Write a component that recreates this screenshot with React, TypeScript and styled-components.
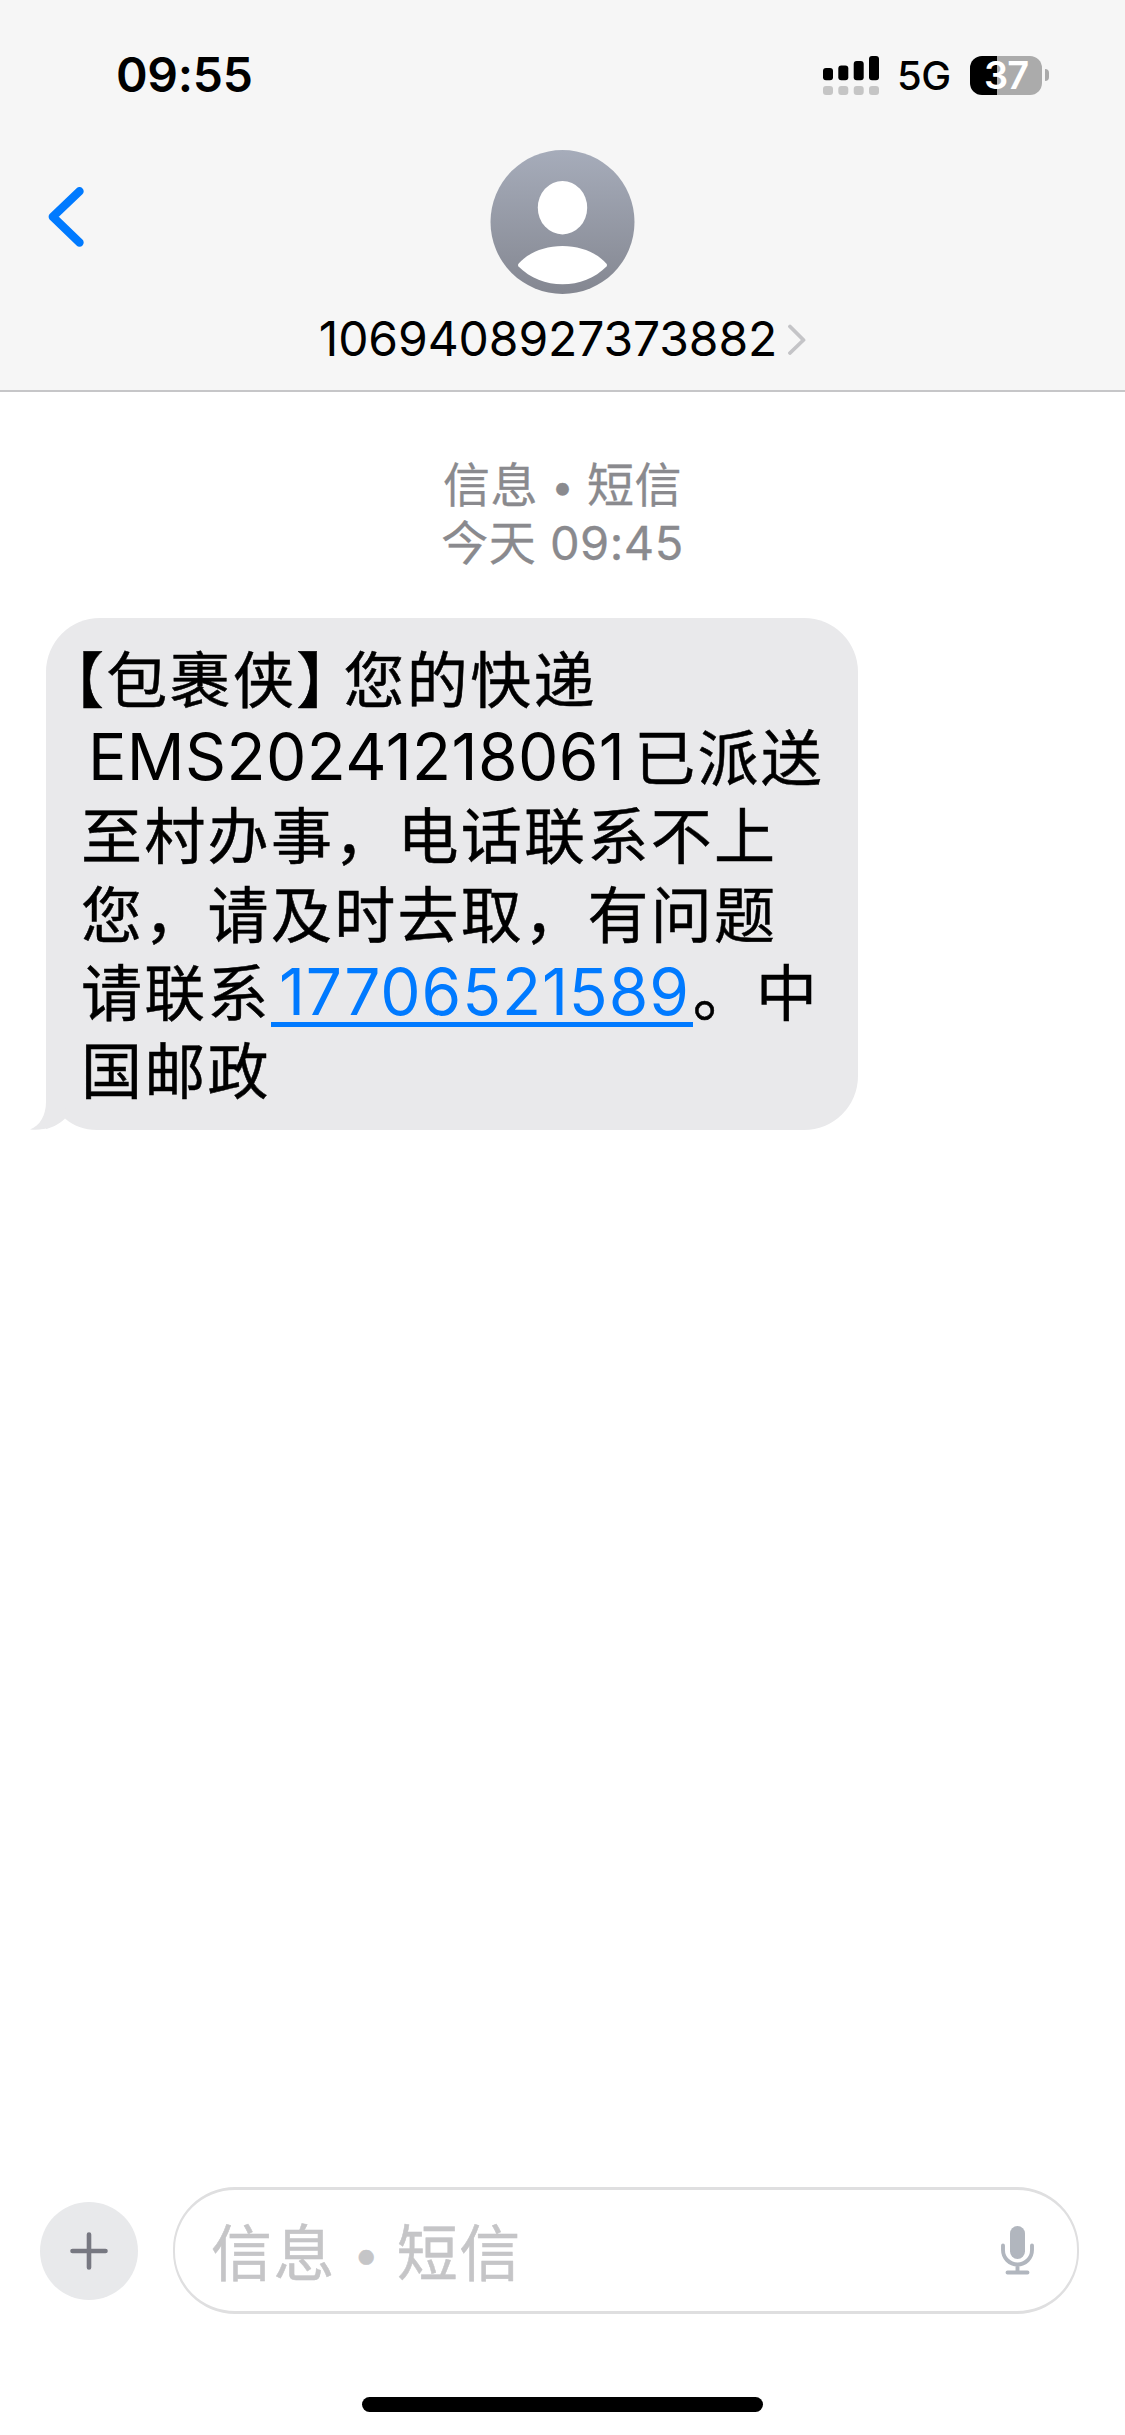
import React from "react";
import styled, { createGlobalStyle } from "styled-components";

const GlobalStyle = createGlobalStyle`
  *, *::before, *::after { box-sizing: border-box; }
  body {
    margin: 0;
    background: #ffffff;
    color: #000000;
    font-family: Inter, "Noto Sans CJK SC", sans-serif;
    text-spacing-trim: space-all;
  }
`;

const Screen = styled.div`
  display: flex;
  flex-direction: column;
  width: 1125px;
  height: 2435px;
  background: #ffffff;
  overflow: hidden;
`;

const Header = styled.header`
  display: flex;
  flex-direction: column;
  height: 392px;
  background: #f6f6f6;
  border-bottom: 2px solid #c6c6c8;
`;

const StatusBar = styled.div`
  display: flex;
  align-items: center;
  justify-content: space-between;
  height: 150px;
  padding: 0 76px 0 116px;
`;

const Clock = styled.time`
  font-size: 48px;
  font-weight: 600;
  line-height: 60px;
  letter-spacing: -0.3px;
`;

const StatusIcons = styled.div`
  display: flex;
  align-items: center;
`;

const Network = styled.span`
  width: 56px;
  margin: 2px 17px 0 18px;
  font-size: 40px;
  font-weight: 450;
  line-height: 40px;
  letter-spacing: -0.5px;
`;

const BatteryBody = styled.div`
  display: flex;
  align-items: center;
  justify-content: center;
  width: 72px;
  height: 39px;
  border-radius: 12px;
  background: linear-gradient(90deg, #000 0 27px, #ababab 27px);
  color: #ffffff;
  font-size: 38px;
  font-weight: 600;
  line-height: 39px;
  letter-spacing: -1px;
`;

const BatteryTip = styled.div`
  width: 4px;
  height: 12px;
  margin-left: 3px;
  border-radius: 0 5px 5px 0;
  background: #ababab;
`;

const ContactBar = styled.div`
  display: grid;
  grid-template-columns: 160px 1fr 160px;
`;

const BackButton = styled.button`
  display: flex;
  align-self: start;
  padding: 36px 0 0 47px;
  border: 0;
  background: none;
`;

const Contact = styled.div`
  display: flex;
  flex-direction: column;
  align-items: center;
`;

const ContactName = styled.div`
  display: flex;
  align-items: center;
  gap: 11px;
  margin-top: 15px;
  font-size: 48px;
  line-height: 60px;
  letter-spacing: -0.1px;
`;

const Thread = styled.main`
  display: flex;
  flex: 1;
  flex-direction: column;
  align-items: flex-start;
`;

const Stamp = styled.div`
  align-self: center;
  margin-top: 64px;
  color: #8a8a8e;
  font-size: 47px;
  line-height: 58px;
  letter-spacing: 0.5px;
  text-align: center;
  white-space: pre;
  -webkit-text-stroke: 0.3px currentColor;
`;

const Dot = styled.span<{ $size: number; $width: number; $lift: number }>`
  display: inline-block;
  width: ${(p) => p.$width}px;
  font-family: Inter, sans-serif;
  font-size: ${(p) => p.$size}px;
  line-height: 1;
  letter-spacing: 0;
  text-align: center;
  vertical-align: ${(p) => p.$lift}px;
`;

const Bubble = styled.div`
  position: relative;
  width: 812px;
  height: 512px;
  margin: 46px 0 0 46px;
  padding: 20px 0 0 35px;
  border-radius: 54px 54px 54px 0;
  background: #e9e9eb;
`;

const Tail = styled.svg`
  position: absolute;
  left: -16px;
  bottom: 0;
`;

const Line = styled.div`
  height: 78.2px;
  font-family: "Noto Sans CJK SC", sans-serif;
  font-size: 61px;
  line-height: 78.2px;
  letter-spacing: 2.3px;
  white-space: pre;
  -webkit-text-stroke: 0.5px currentColor;
`;

const OpenBracket = styled.span`
  margin-left: -38px;
`;

const CloseBracket = styled.span`
  margin-right: -16px;
`;

const Latin = styled.span`
  margin: 0 9px 0 7px;
  font-family: Inter, sans-serif;
  font-size: 64px;
  letter-spacing: 0.4px;
  line-height: 1;
  vertical-align: 1px;
  -webkit-text-stroke: 0;
`;

const Phone = styled.a`
  padding: 0 3px 0 8px;
  background: linear-gradient(#007aff, #007aff) 0 69px / 100% 5px no-repeat;
  color: #007aff;
  font-family: Inter, sans-serif;
  font-size: 64px;
  letter-spacing: 0.9px;
  line-height: 1;
  text-decoration: none;
  vertical-align: 1px;
  -webkit-text-stroke: 0;
`;

const Composer = styled.footer`
  display: flex;
  align-items: center;
  gap: 35px;
  height: 127px;
  padding: 0 46px 0 40px;
`;

const AddButton = styled.button`
  display: flex;
  align-items: center;
  justify-content: center;
  width: 98px;
  height: 98px;
  padding: 0;
  border: 0;
  border-radius: 50%;
  background: #e8e9eb;
`;

const Field = styled.div`
  display: flex;
  flex: 1;
  align-items: center;
  justify-content: space-between;
  height: 127px;
  padding: 0 43px 0 36px;
  border: solid #dfdfe0;
  border-width: 3px 2.5px;
  border-radius: 62px;
`;

const Placeholder = styled.span`
  margin-top: -2px;
  color: #c5c5c7;
  font-family: "Noto Sans CJK SC", sans-serif;
  font-size: 61px;
  line-height: 80px;
  letter-spacing: 1.4px;
  white-space: pre;
  -webkit-text-stroke: 0.5px currentColor;
`;

const HomeArea = styled.div`
  display: flex;
  justify-content: center;
  height: 121px;
  padding-top: 83px;
`;

const HomeIndicator = styled.div`
  width: 401px;
  height: 15px;
  border-radius: 8px;
  background: #000000;
`;

const SIGNAL = [
  { x: 0, top: 12 },
  { x: 15.3, top: 9.5 },
  { x: 30.7, top: 5 },
  { x: 46, top: 0 },
];

function SignalIcon() {
  return (
    <svg width="56" height="39" viewBox="0 0 56 39">
      {SIGNAL.map((bar) => (
        <React.Fragment key={bar.x}>
          <rect x={bar.x} y={bar.top} width="10" height={24.3 - bar.top} rx="3" />
          <rect x={bar.x} y="30" width="10" height="9" rx="3" fill="#c5c5c5" />
        </React.Fragment>
      ))}
    </svg>
  );
}

function Avatar() {
  return (
    <svg width="145" height="144" viewBox="0 0 145 144">
      <defs>
        <linearGradient id="avatar" x1="0" y1="0" x2="0" y2="1">
          <stop offset="0" stopColor="#a6acba" />
          <stop offset="1" stopColor="#848791" />
        </linearGradient>
      </defs>
      <circle cx="72.5" cy="72" r="72" fill="url(#avatar)" />
      <ellipse cx="72.5" cy="57.7" rx="24.7" ry="26.7" fill="#fff" />
      <path
        d="M28.5 116.5C27.8 115.5 27.8 114.7 28.5 113.7C38 103 54 96 72.5 96S107 103 116.5 113.7C117.2 114.7 117.2 115.5 116.5 116.5C105 128 89 134.3 72.5 134.3S40 128 28.5 116.5Z"
        fill="#fff"
      />
    </svg>
  );
}

export default function App() {
  return (
    <>
      <GlobalStyle />
      <Screen>
        <Header>
          <StatusBar>
            <Clock>09:55</Clock>
            <StatusIcons>
              <SignalIcon />
              <Network>5G</Network>
              <BatteryBody>37</BatteryBody>
              <BatteryTip />
            </StatusIcons>
          </StatusBar>
          <ContactBar>
            <BackButton aria-label="返回">
              <svg width="40" height="62" viewBox="0 0 40 62" fill="none">
                <path
                  d="M32.5 5.3L5.8 30.8L32.5 56.5"
                  stroke="#007aff"
                  strokeWidth="8.4"
                  strokeLinecap="round"
                  strokeLinejoin="round"
                />
              </svg>
            </BackButton>
            <Contact>
              <Avatar />
              <ContactName>
                1069408927373882
                <svg width="18" height="32" viewBox="0 0 18 32" fill="none">
                  <path
                    d="M2 3.5L15.5 17L2 30"
                    stroke="#c4c4c7"
                    strokeWidth="3.8"
                    strokeLinecap="round"
                    strokeLinejoin="round"
                  />
                </svg>
              </ContactName>
            </Contact>
          </ContactBar>
        </Header>

        <Thread>
          <Stamp>
            <div>
              信息<Dot $size={40} $width={49} $lift={1}>•</Dot>短信
            </div>
            <div>今天 09:45</div>
          </Stamp>
          <Bubble>
            <Tail width="70" height="28" viewBox="0 0 70 28">
              <path d="M16 0C16 13 10 24 0 27.5C13 29 26 25 35 16.5L36 0Z" fill="#e9e9eb" />
              <path d="M10 28C20 27 29 22.5 35 16.5C44 24 54 28 67 28Z" fill="#fff" />
            </Tail>
            <Line>
              <OpenBracket>【</OpenBracket>包裹侠<CloseBracket>】</CloseBracket>您的快递
            </Line>
            <Line>
              <Latin>EMS20241218061</Latin>已派送
            </Line>
            <Line>至村办事，电话联系不上</Line>
            <Line>您，请及时去取，有问题</Line>
            <Line>
              请联系<Phone>17706521589</Phone>。中
            </Line>
            <Line>国邮政</Line>
          </Bubble>
        </Thread>

        <Composer>
          <AddButton aria-label="添加">
            <svg width="38" height="38" viewBox="0 0 38 38" fill="none">
              <path d="M19 2.5V35.5M2.5 19H35.5" stroke="#777881" strokeWidth="4.6" strokeLinecap="round" />
            </svg>
          </AddButton>
          <Field>
            <Placeholder>
              信息<Dot $size={47} $width={61} $lift={5}>•</Dot>短信
            </Placeholder>
            <svg width="33" height="49" viewBox="0 0 33 49" fill="none">
              <rect x="9" y="0" width="15" height="33" rx="7.5" fill="#b1b6be" />
              <path
                d="M2 19.5V24A14.5 14.5 0 0 0 31 24V19.5M16.5 39V46M6.5 46.5H26.5"
                stroke="#b1b6be"
                strokeWidth="3.9"
                strokeLinecap="round"
              />
            </svg>
          </Field>
        </Composer>
        <HomeArea>
          <HomeIndicator />
        </HomeArea>
      </Screen>
    </>
  );
}
